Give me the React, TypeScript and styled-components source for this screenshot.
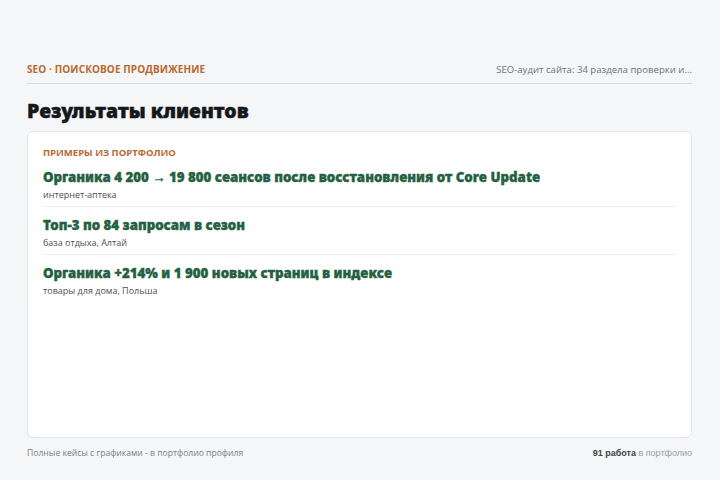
import React from 'react';
import styled, { createGlobalStyle } from 'styled-components';

const GlobalStyle = createGlobalStyle`
  html, body {
    margin: 0;
    padding: 0;
    background: #f5f6f8;
  }
  body {
    font-family: 'Open Sans', 'Noto Sans', sans-serif;
  }
`;

const Page = styled.div`
  width: 720px;
  height: 480px;
  box-sizing: border-box;
  padding: 62px 28px 0 27px;
  display: flex;
  flex-direction: column;
`;

const TopBar = styled.div`
  display: flex;
  align-items: center;
  justify-content: space-between;
  padding-bottom: 7px;
  border-bottom: 1px solid #d8dbe0;
`;

const Kicker = styled.div`
  font-size: 10px;
  font-weight: 700;
  color: #b8692e;
  letter-spacing: 0.1px;
`;

const TopNote = styled.div`
  font-size: 9.6px;
  color: #6b7280;
`;

const Title = styled.h1`
  margin: 14px 0 7px;
  font-family: 'Noto Sans', sans-serif;
  font-size: 19.5px;
  font-weight: 900;
  color: #15171a;
  line-height: 26px;
  -webkit-text-stroke: 0.45px #15171a;
`;

const Card = styled.div`
  height: 307px;
  box-sizing: border-box;
  background: #ffffff;
  border: 1px solid #e2e5e9;
  border-radius: 6px;
  padding: 14px 15px;
`;

const CardLabel = styled.div`
  font-size: 9.5px;
  font-weight: 700;
  color: #b8692e;
  line-height: 13px;
`;

const Item = styled.div<{ $last?: boolean }>`
  padding: 8px 0 3px;
  border-bottom: ${(p) => (p.$last ? 'none' : '1px solid #eceef1')};
`;

const ItemTitle = styled.div`
  font-family: 'Noto Sans', sans-serif;
  font-size: 13.3px;
  font-weight: 900;
  color: #24613f;
  line-height: 20px;
  -webkit-text-stroke: 0.35px #24613f;
`;

const ItemSub = styled.div`
  font-size: 9px;
  color: #4b5058;
  line-height: 16px;
`;

const Footer = styled.div`
  display: flex;
  justify-content: space-between;
  align-items: center;
  margin-top: 9px;
  font-size: 8.6px;
  color: #7a7f87;
`;

const FooterRight = styled.div`
  font-family: 'Liberation Sans', Arial, sans-serif;
  font-size: 9px;
  color: #9aa0a8;
  b {
    color: #3c4048;
    font-weight: 700;
  }
`;

const items = [
  { title: 'Органика 4 200 → 19 800 сеансов после восстановления от Core Update', sub: 'интернет-аптека' },
  { title: 'Топ-3 по 84 запросам в сезон', sub: 'база отдыха, Алтай' },
  { title: 'Органика +214% и 1 900 новых страниц в индексе', sub: 'товары для дома, Польша' },
];

export default function App() {
  return (
    <>
      <GlobalStyle />
      <Page>
        <TopBar>
          <Kicker>SEO · ПОИСКОВОЕ ПРОДВИЖЕНИЕ</Kicker>
          <TopNote>SEO-аудит сайта: 34 раздела проверки и...</TopNote>
        </TopBar>
        <Title>Результаты клиентов</Title>
        <Card>
          <CardLabel>ПРИМЕРЫ ИЗ ПОРТФОЛИО</CardLabel>
          {items.map((it, i) => (
            <Item key={i} $last={i === items.length - 1}>
              <ItemTitle>{it.title}</ItemTitle>
              <ItemSub>{it.sub}</ItemSub>
            </Item>
          ))}
        </Card>
        <Footer>
          <div>Полные кейсы с графиками - в портфолио профиля</div>
          <FooterRight>
            <b>91 работа</b> в портфолио
          </FooterRight>
        </Footer>
      </Page>
    </>
  );
}
